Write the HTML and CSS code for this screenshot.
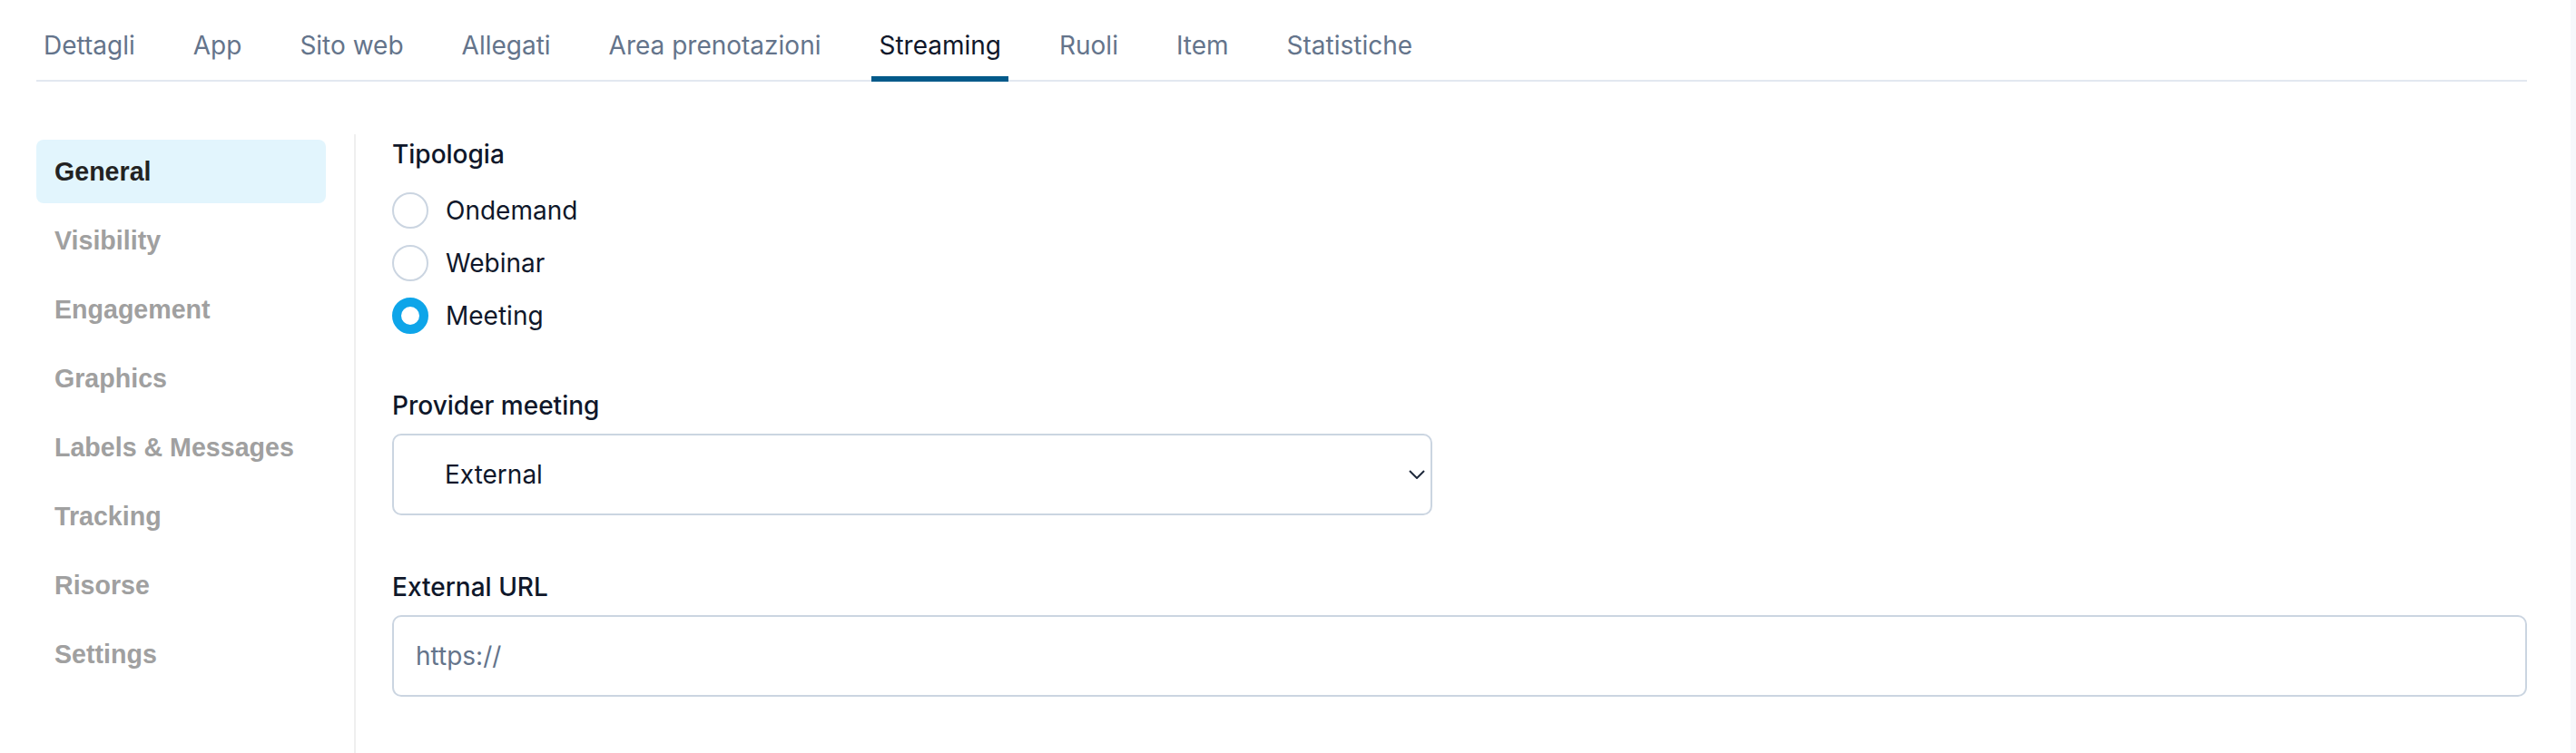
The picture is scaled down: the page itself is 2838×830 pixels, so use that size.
FILE: index.html
```html
<!DOCTYPE html>
<html lang="it">
<head>
    <meta charset="UTF-8">
    <meta name="viewport" content="width=device-width, initial-scale=1.0">
    <title>Streaming</title>
    <link rel="stylesheet" href="styles.css">
</head>
<body>
    <div class="page">
        <nav class="tabs">
            <a class="tab" href="#">Dettagli</a>
            <a class="tab" href="#">App</a>
            <a class="tab" href="#">Sito web</a>
            <a class="tab" href="#">Allegati</a>
            <a class="tab" href="#">Area prenotazioni</a>
            <a class="tab active" href="#">Streaming</a>
            <a class="tab" href="#">Ruoli</a>
            <a class="tab" href="#">Item</a>
            <a class="tab" href="#">Statistiche</a>
        </nav>

        <div class="layout">
            <aside class="sidebar">
                <a class="side-item active" href="#">General</a>
                <a class="side-item" href="#">Visibility</a>
                <a class="side-item" href="#">Engagement</a>
                <a class="side-item" href="#">Graphics</a>
                <a class="side-item" href="#">Labels &amp; Messages</a>
                <a class="side-item" href="#">Tracking</a>
                <a class="side-item" href="#">Risorse</a>
                <a class="side-item" href="#">Settings</a>
            </aside>

            <main class="content">
                <div class="field">
                    <label class="field-label">Tipologia</label>
                    <div class="radios">
                        <label class="radio-row">
                            <input type="radio" name="tipologia" value="ondemand">
                            <span>Ondemand</span>
                        </label>
                        <label class="radio-row">
                            <input type="radio" name="tipologia" value="webinar">
                            <span>Webinar</span>
                        </label>
                        <label class="radio-row">
                            <input type="radio" name="tipologia" value="meeting" checked>
                            <span>Meeting</span>
                        </label>
                    </div>
                </div>

                <div class="field field-select">
                    <label class="field-label" for="provider">Provider meeting</label>
                    <div class="select-wrap">
                        <select id="provider" class="select">
                            <option>External</option>
                            <option>Zoom</option>
                            <option>Teams</option>
                        </select>
                        <svg class="chevron" width="18" height="10" viewBox="0 0 18 10">
                            <path d="M1 1l8 8 8-8" fill="none" stroke="#1e293b" stroke-width="2"/>
                        </svg>
                    </div>
                </div>

                <div class="field">
                    <label class="field-label" for="external-url">External URL</label>
                    <input type="text" id="external-url" class="text-input" value="https://">
                </div>
            </main>
        </div>
    </div>
</body>
</html>
```

FILE: styles.css
```css
:root {
    --text-dark: #0f172a;
    --text-muted: #64748b;
    --border: #cbd5e1;
    --line: #e2e8f0;
    --active-tab: #035a8a;
    --side-active-bg: #e2f5fd;
    --side-muted: #a0a0a0;
    --radio-on: #0ea5e9;
}

* {
    margin: 0;
    padding: 0;
    box-sizing: border-box;
}

html {
    background-color: #f6f8fb;
}

body {
    background-color: #fff;
    margin-right: 6px;
    min-height: 100vh;
    font-family: Inter, "Noto Sans", sans-serif;
    color: var(--text-dark);
}

.page {
    padding: 0 48px 0 40px;
}

/* top tabs */
.tabs {
    display: flex;
    gap: 48px;
    border-bottom: 2px solid var(--line);
}

.tab {
    display: block;
    padding: 33px 8px 17px;
    line-height: 34px;
    font-size: 28px;
    color: var(--text-muted);
    text-decoration: none;
    border-bottom: 6px solid transparent;
    margin-bottom: -2px;
}

.tab.active {
    color: var(--text-dark);
    border-bottom-color: var(--active-tab);
}

/* two columns */
.layout {
    display: flex;
    margin-top: 58px;
    min-height: 700px;
}

.sidebar {
    width: 352px;
    flex-shrink: 0;
    padding: 6px 31px 0 0;
    border-right: 2px solid #efefef;
    display: flex;
    flex-direction: column;
    gap: 6px;
}

.side-item {
    display: block;
    height: 70px;
    line-height: 70px;
    padding-left: 20px;
    border-radius: 8px;
    font-family: "Liberation Sans", Arial, sans-serif;
    font-weight: bold;
    font-size: 28.6px;
    color: var(--side-muted);
    text-decoration: none;
}

.side-item.active {
    background-color: var(--side-active-bg);
    color: #222;
}

.content {
    flex: 1;
    padding: 2px 0 0 40px;
}

.field {
    margin-bottom: 50px;
}

.field-select {
    margin-bottom: 59px;
}

.field-label {
    display: block;
    font-size: 28px;
    font-weight: 500;
    line-height: 40px;
    margin-bottom: 11px;
}

.radios {
    padding-top: 2px;
}

.radio-row {
    display: flex;
    align-items: center;
    gap: 19px;
    height: 58px;
    font-size: 28px;
    cursor: pointer;
}

.radio-row input {
    appearance: none;
    -webkit-appearance: none;
    width: 40px;
    height: 40px;
    border-radius: 50%;
    border: 2px solid var(--border);
    background: #fff;
    margin: 0;
}

.radio-row input:checked {
    border: 10px solid var(--radio-on);
}

.select-wrap {
    position: relative;
    width: 1146px;
}

.select {
    appearance: none;
    -webkit-appearance: none;
    display: block;
    width: 100%;
    height: 90px;
    padding-left: 56px;
    border: 2px solid var(--border);
    border-radius: 10px;
    background: #fff;
    font-family: Inter, "Noto Sans", sans-serif;
    font-size: 28px;
    color: var(--text-dark);
}

.chevron {
    position: absolute;
    right: 8px;
    top: 40px;
}

.text-input {
    display: block;
    width: 100%;
    height: 90px;
    padding-left: 24px;
    border: 2px solid var(--border);
    border-radius: 10px;
    font-family: Inter, "Noto Sans", sans-serif;
    font-size: 28px;
    color: var(--text-muted);
}
```
